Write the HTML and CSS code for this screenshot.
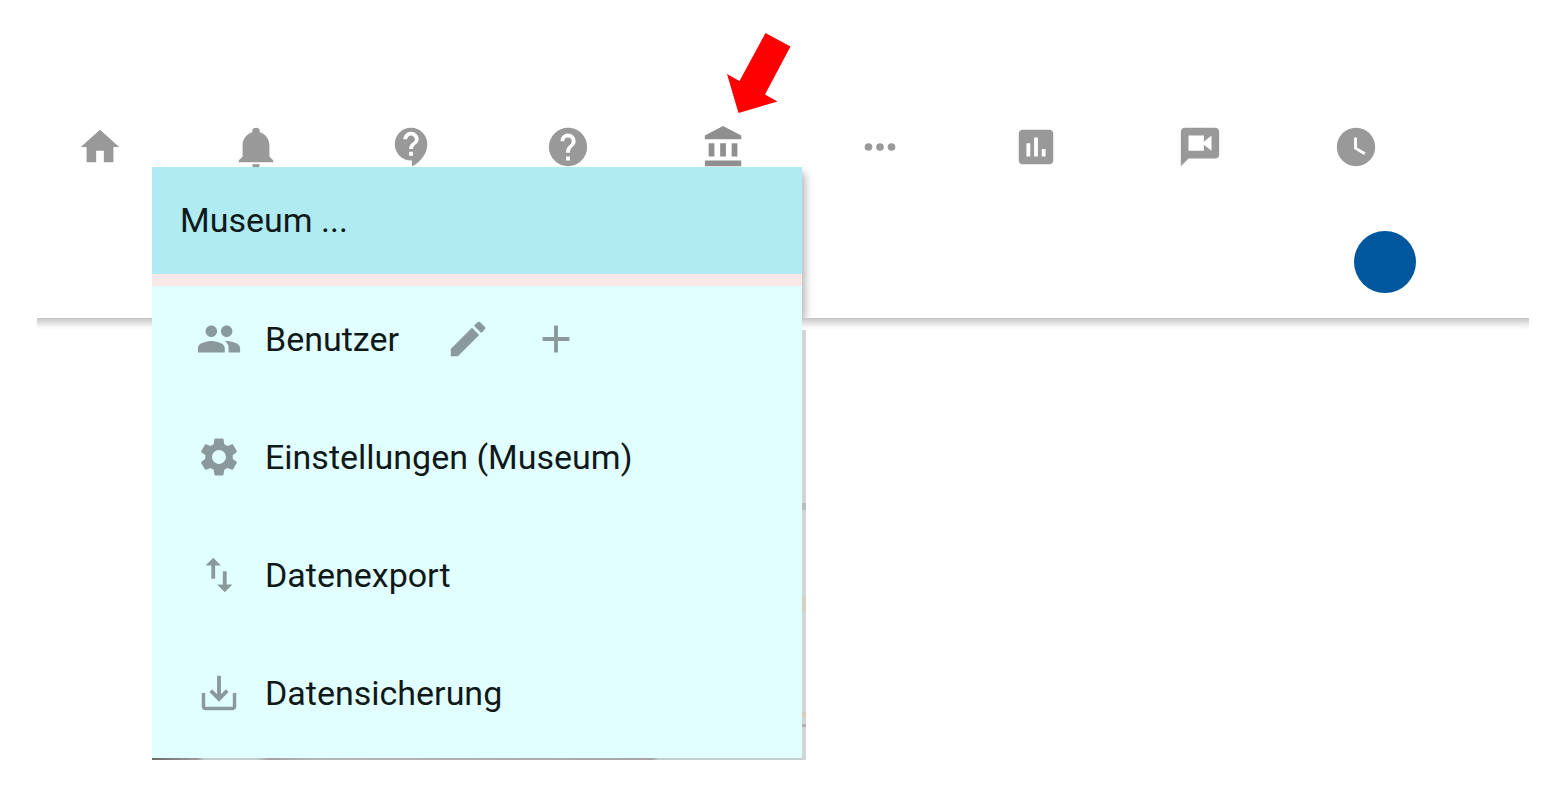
FILE: index.html
```html
<!DOCTYPE html>
<html lang="de">
<head>
<meta charset="utf-8">
<title>Museum</title>
<meta name="viewport" content="width=device-width, initial-scale=1">
<link rel="stylesheet" href="styles.css">
</head>
<body>
<header class="topbar">
  <nav class="nav" aria-label="Hauptnavigation">
    <div class="nav-group nav-main">
      <button class="nav-btn" type="button" aria-label="Start"><svg class="icon" viewBox="0 0 24 24"><path d="M10 20v-6h4v6h5v-8h3L12 3 2 12h3v8z"/></svg></button>
      <button class="nav-btn" type="button" aria-label="Benachrichtigungen"><svg class="icon" viewBox="0 0 24 24"><path d="M21,19V20H3V19L5,17V11C5,7.9 7.03,5.17 10,4.29C10,4.19 10,4.1 10,4A2,2 0 0,1 12,2A2,2 0 0,1 14,4C14,4.1 14,4.19 14,4.29C16.97,5.17 19,7.9 19,11V17L21,19M14,21A2,2 0 0,1 12,23A2,2 0 0,1 10,21"/></svg></button>
      <button class="nav-btn" type="button" aria-label="Kontakt"><svg class="icon" viewBox="0 0 24 24"><path d="M11.5 2C6.81 2 3 5.81 3 10.5S6.81 19 11.5 19h.5v3c4.86-2.34 8-7 8-11.5C20 5.81 16.19 2 11.5 2zm1 14.5h-2v-2h2v2zm0-3.5h-2c0-3.25 3-3 3-5 0-1.1-.9-2-2-2s-2 .9-2 2h-2c0-2.21 1.79-4 4-4s4 1.79 4 4c0 2.5-3 2.75-3 5z"/></svg></button>
      <button class="nav-btn" type="button" aria-label="Hilfe"><svg class="icon" viewBox="0 0 24 24"><path d="M15.07,11.25L14.17,12.17C13.45,12.89 13,13.5 13,15H11V14.5C11,13.39 11.45,12.39 12.17,11.67L13.41,10.41C13.78,10.05 14,9.55 14,9C14,7.89 13.1,7 12,7A2,2 0 0,0 10,9H8A4,4 0 0,1 12,5A4,4 0 0,1 16,9C16,9.88 15.64,10.67 15.07,11.25M13,19H11V17H13M12,2A10,10 0 0,0 2,12A10,10 0 0,0 12,22A10,10 0 0,0 22,12C22,6.47 17.5,2 12,2Z"/></svg></button>
      <button class="nav-btn nav-active" type="button" aria-label="Museum" aria-expanded="true"><svg class="icon" viewBox="0 0 24 24"><path d="M11.5,1L2,6V8H21V6M16,10V17H19V10M2,22H21V19H2M10,10V17H13V10M4,10V17H7V10H4Z"/></svg></button>
      <button class="nav-btn" type="button" aria-label="Mehr"><svg class="icon" viewBox="0 0 24 24"><circle cx="6" cy="12" r="2"/><circle cx="12" cy="12" r="2"/><circle cx="18" cy="12" r="2"/></svg></button>
      <button class="nav-btn" type="button" aria-label="Statistik"><svg class="icon" viewBox="0 0 24 24"><path d="M19 3H5c-1.1 0-2 .9-2 2v14c0 1.1.9 2 2 2h14c1.1 0 2-.9 2-2V5c0-1.1-.9-2-2-2zM9 17H7v-7h2v7zm4 0h-2V7h2v10zm4 0h-2v-4h2v4z"/></svg></button>
    </div>
    <div class="nav-group nav-extra">
      <button class="nav-btn" type="button" aria-label="Videochat"><svg class="icon" viewBox="0 0 24 24"><path d="M20 2H4c-1.1 0-1.99.9-1.99 2L2 22l4-4h14c1.1 0 2-.9 2-2V4c0-1.1-.9-2-2-2zm-2 12l-4-3.2V14H6V6h8v3.2L18 6v8z"/></svg></button>
      <button class="nav-btn" type="button" aria-label="Verlauf"><svg class="icon" viewBox="0 0 24 24"><path d="M12 2C6.48 2 2 6.48 2 12s4.48 10 10 10 10-4.48 10-10S17.52 2 12 2zM16.2 16.2L11 13V7h1.5v5.2l4.5 2.7-.8 1.3z"/></svg></button>
    </div>
  </nav>
  <div class="account"><button class="avatar" type="button" aria-label="Konto"></button></div>
</header>

<svg class="pointer" viewBox="0 0 66 82" aria-hidden="true"><path d="M39.5 1L64.5 14.5L39 62.5L51.5 69.5L12.5 81L1 42L13.5 49Z"/></svg>

<section class="menu" aria-labelledby="menu-title">
  <h1 class="menu-title" id="menu-title">Museum ...</h1>
  <ul class="menu-list">
    <li class="menu-row">
      <button class="entry" type="button"><svg class="icon" viewBox="0 0 24 24"><path d="M16 11c1.66 0 2.99-1.34 2.99-3S17.66 5 16 5c-1.66 0-3 1.34-3 3s1.34 3 3 3zm-8 0c1.66 0 2.99-1.34 2.99-3S9.66 5 8 5C6.34 5 5 6.34 5 8s1.34 3 3 3zm0 2c-2.33 0-7 1.17-7 3.5V19h14v-2.5c0-2.33-4.67-3.5-7-3.5zm8 0c-.29 0-.62.02-.97.05 1.16.84 1.97 1.97 1.97 3.45V19h6v-2.5c0-2.33-4.67-3.5-7-3.5z"/></svg>Benutzer</button>
      <button class="tool" type="button" aria-label="Benutzer bearbeiten"><svg class="icon" viewBox="0 0 24 24"><path d="M3 17.25V21h3.75L17.81 9.94l-3.75-3.75L3 17.25zM20.71 7.04c.39-.39.39-1.02 0-1.41l-2.34-2.34c-.39-.39-1.02-.39-1.41 0l-1.83 1.83 3.75 3.75 1.83-1.83z"/></svg></button>
      <button class="tool" type="button" aria-label="Benutzer anlegen"><svg class="icon" viewBox="0 0 24 24"><path d="M19 13h-6v6h-2v-6H5v-2h6V5h2v6h6z"/></svg></button>
    </li>
    <li class="menu-row">
      <button class="entry" type="button"><svg class="icon" viewBox="0 0 24 24"><path d="M19.14 12.94c.04-.3.06-.61.06-.94 0-.32-.02-.64-.07-.94l2.03-1.58c.18-.14.23-.41.12-.61l-1.92-3.32c-.12-.22-.37-.29-.59-.22l-2.39.96c-.5-.38-1.03-.7-1.62-.94l-.36-2.54c-.04-.24-.24-.41-.48-.41h-3.84c-.24 0-.43.17-.47.41l-.36 2.54c-.59.24-1.13.57-1.62.94l-2.39-.96c-.22-.08-.47 0-.59.22L2.74 8.87c-.12.21-.08.47.12.61l2.03 1.58c-.05.3-.09.63-.09.94s.02.64.07.94l-2.03 1.58c-.18.14-.23.41-.12.61l1.92 3.32c.12.22.37.29.59.22l2.39-.96c.5.38 1.03.7 1.62.94l.36 2.54c.05.24.24.41.48.41h3.84c.24 0 .44-.17.47-.41l.36-2.54c.59-.24 1.13-.56 1.62-.94l2.39.96c.22.08.47 0 .59-.22l1.92-3.32c.12-.22.07-.47-.12-.61l-2.01-1.58zM12 15.6c-1.98 0-3.6-1.62-3.6-3.6s1.62-3.6 3.6-3.6 3.6 1.62 3.6 3.6-1.62 3.6-3.6 3.6z"/></svg>Einstellungen (Museum)</button>
    </li>
    <li class="menu-row">
      <button class="entry" type="button"><svg class="icon" viewBox="0 0 24 24"><path d="M16 17.01V10h-2v7.01h-3L15 21l4-3.99h-3zM9 3L5 6.99h3V14h2V6.99h3L9 3z"/></svg>Datenexport</button>
    </li>
    <li class="menu-row">
      <button class="entry" type="button"><svg class="icon" viewBox="0 0 24 24"><path d="M19.2 12v7.2H4.8V12H3v7c0 1.1.9 2 2 2h14c1.1 0 2-.9 2-2v-7zM13 12.67l2.59-2.58L17 11.5l-5 5-5-5 1.41-1.41L11 12.67V3h2z"/></svg>Datensicherung</button>
    </li>
  </ul>
</section>
</body>
</html>
```
FILE: styles.css
```css
* {
  box-sizing: border-box;
}

body {
  margin: 0;
  background: #fff;
  color: #10191a;
  font-family: Roboto, "Liberation Sans", sans-serif;
  font-size: 34px;
  line-height: 40px;
}

button {
  margin: 0;
  padding: 0;
  border: 0;
  background: none;
  color: inherit;
  font: inherit;
  cursor: pointer;
}

.icon {
  display: block;
  flex: none;
  width: 46px;
  height: 46px;
  fill: currentColor;
}

/* Top bar */
.topbar {
  padding-top: 124px;
}

.nav {
  display: flex;
  gap: 8px;
  padding: 0 120px 0 22px;
}

.nav-group {
  display: flex;
}

.nav-main {
  flex: 7;
}

.nav-extra {
  flex: 2;
}

.nav-btn {
  display: flex;
  flex: 1;
  justify-content: center;
  color: #999;
}

.nav-active {
  color: #8f8f8f;
}

.account {
  display: flex;
  justify-content: flex-end;
  padding: 61px 138px 25px 0;
}

.avatar {
  width: 62px;
  height: 62px;
  border-radius: 50%;
  background: #00579d;
}

/* Soft edge under the bar */
.topbar::after {
  content: "";
  display: block;
  height: 12px;
  margin: 0 25px 0 37px;
  background: linear-gradient(#c4c4c4, #dadada 30%, #f4f4f4 70%, #fff);
}

.pointer {
  position: absolute;
  top: 32px;
  left: 726px;
  width: 66px;
  height: 82px;
  fill: #f00;
}

/* Drop-down menu */
.menu {
  position: absolute;
  top: 167px;
  left: 152px;
  width: 650px;
  background: #e2ffff;
}

.menu::before {
  content: "";
  position: absolute;
  z-index: -1;
  top: 4px;
  right: 0;
  width: 40px;
  height: 148px;
  box-shadow: 3px 2px 8px rgba(0, 0, 0, 0.3);
}

/* Page content showing past the right edge */
.menu::after {
  content: "";
  position: absolute;
  top: 163px;
  bottom: 0;
  left: 100%;
  width: 4px;
  background: linear-gradient(#d0d6d6 173px, #b8bebe 173px 180px, #d0d6d6 180px 267px, #d8d0c4 267px 281px, #d0d6d6 281px 382px, #d9cabb 382px 387px, #d0d6d6 387px 394px, #b4b0b2 394px 397px, #d0d6d6 397px);
}

.menu-title {
  margin: 0;
  padding: 33px 28px 34px;
  border-bottom: 12px solid #f9e8e8;
  background: #b0ebf2;
  font-size: 34px;
  font-weight: 400;
  line-height: 40px;
}

.menu-list {
  display: grid;
  gap: 12px;
  margin: 0;
  padding: 0 0 14px;
  list-style: none;
}

/* Page content showing past the bottom edge */
.menu-list::after {
  content: "";
  position: absolute;
  right: 0;
  bottom: 0;
  left: 0;
  height: 2px;
  background: linear-gradient(90deg, #6f6a6a, #9a9a9a 7%, #c3cdcd 8% 16%, #a3a3a3 18%, #b4b7b7 25%, #aaa4a8 77%, #c4d0d0 78%);
}

.menu-row {
  display: flex;
  align-items: center;
  gap: 42px;
  padding: 30px 44px;
}

.entry {
  display: flex;
  align-items: center;
  gap: 23px;
  margin-right: 4px;
  text-align: left;
  white-space: nowrap;
}

.menu .icon {
  color: #8a9a9c;
}
```
